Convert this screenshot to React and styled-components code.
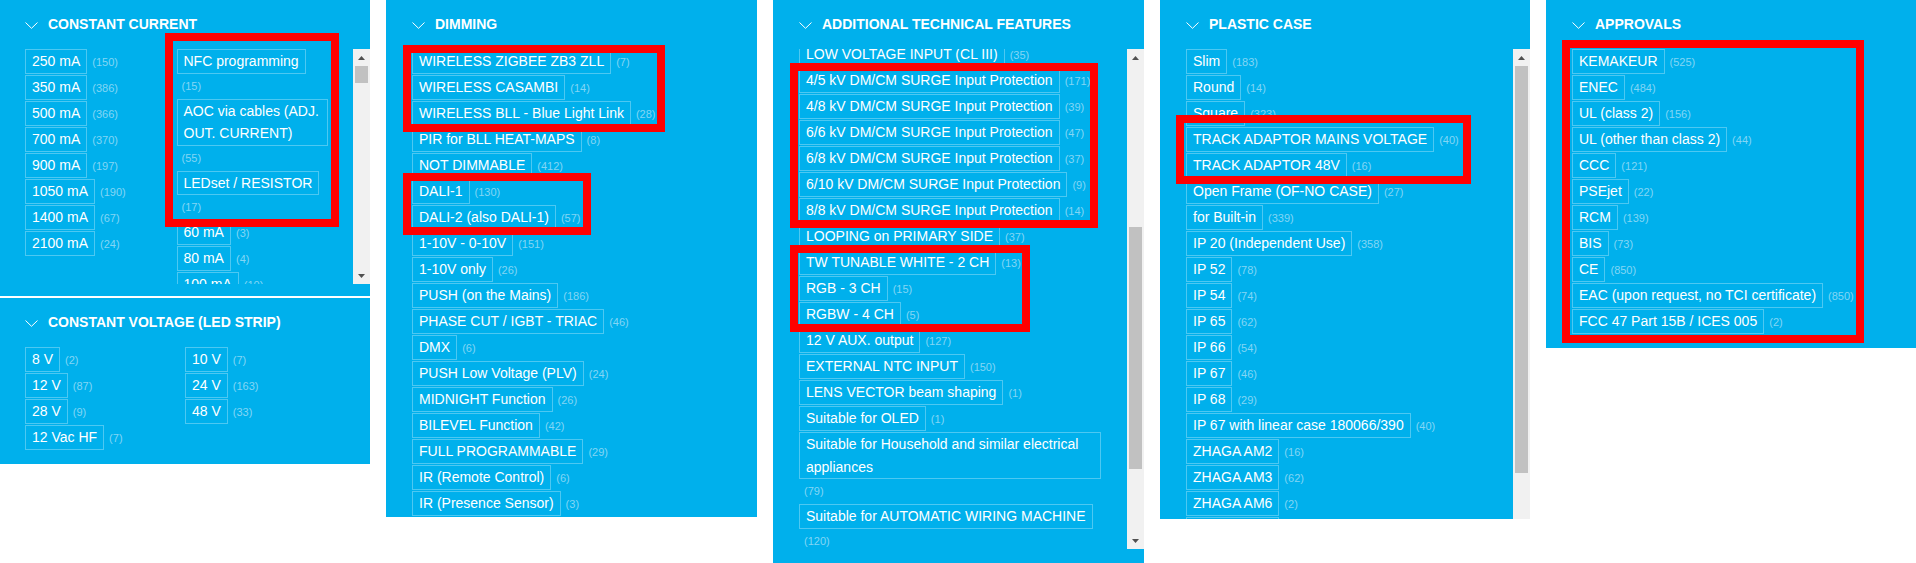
import styled, { createGlobalStyle } from "styled-components";

const GlobalStyle = createGlobalStyle`
  html, body {
    margin: 0;
    padding: 0;
    background: #ffffff;
  }
  body {
    font-family: "Liberation Sans", Arial, Helvetica, sans-serif;
  }
`;

const Page = styled.div`
  display: flex;
  align-items: flex-start;
  gap: 16px;
  width: 1916px;
  overflow: hidden;
`;

const Panel = styled.section`
  --inset: ${(p) => p.$inset ?? 26}px;
  position: relative;
  flex: none;
  width: ${(p) => p.$width}px;
  height: ${(p) => (p.$height ? `${p.$height}px` : "auto")};
  overflow: hidden;
  background: #00b0ec;
  color: #ffffff;
`;

const Section = styled.div`
  padding-bottom: ${(p) => p.$pb ?? 0}px;
  & + & {
    border-top: 2px solid #ffffff;
  }
`;

const Header = styled.div`
  display: flex;
  align-items: center;
  gap: 10px;
  height: 20px;
  padding: 14px var(--inset) 0;
  margin-bottom: 15px;
  font-size: 14px;
  font-weight: 700;
  text-transform: uppercase;
  white-space: nowrap;
`;

const Chevron = styled.svg`
  flex: none;
  margin-top: 3px;
`;

const ScrollArea = styled.div`
  display: flex;
  height: ${(p) => p.$height}px;
`;

const Viewport = styled.div`
  flex: 1;
  min-width: 0;
  overflow: hidden;
  padding: 0 var(--inset);
`;

const Plain = styled.div`
  padding: 0 var(--inset);
`;

const Rail = styled.div`
  flex: none;
  width: 17px;
  display: flex;
  flex-direction: column;
  background: #f1f1f1;
`;

const RailButton = styled.div`
  flex: none;
  height: 17px;
  display: flex;
  align-items: center;
  justify-content: center;
`;

const Track = styled.div`
  flex: 1;
  min-height: 0;
`;

const Thumb = styled.div`
  margin: ${(p) => p.$offset}px 2px 0;
  height: ${(p) => p.$size}px;
  background: #c1c1c1;
`;

const Columns = styled.div`
  display: grid;
  grid-template-columns: 1fr 1fr;
  align-items: start;
`;

const List = styled.ul`
  list-style: none;
  margin: ${(p) => p.$shift ?? 0}px 0 0;
  padding: 0;
`;

const Item = styled.li`
  font-size: 14px;
  line-height: 22.5px;
  margin-bottom: 1.5px;
`;

const Tag = styled.span`
  display: inline-block;
  padding: 0 6px;
  border: 1px solid rgba(255, 255, 255, 0.3);
  line-height: 22.5px;
  color: #ffffff;
`;

const Count = styled.span`
  margin-left: 5px;
  font-size: 11px;
  color: #83d6f5;
`;

const Mark = styled.div`
  position: absolute;
  left: ${(p) => p.$x}px;
  top: ${(p) => p.$y}px;
  width: ${(p) => p.$w}px;
  height: ${(p) => p.$h}px;
  box-sizing: border-box;
  border: 8px solid #ff0000;
  pointer-events: none;
`;

const Head = ({ children }) => (
  <Header>
    <Chevron width="13" height="7" viewBox="0 0 13 7">
      <polyline points="0.5,0.5 6.5,6.3 12.5,0.5" fill="none" stroke="#ffffff" strokeWidth="1" />
    </Chevron>
    <span>{children}</span>
  </Header>
);

const Filters = ({ items, shift }) => (
  <List $shift={shift}>
    {items.map(([label, count]) => (
      <Item key={label}>
        <Tag>{label}</Tag>
        <Count>({count})</Count>
      </Item>
    ))}
  </List>
);

const Scroller = ({ height, offset, size, children }) => (
  <ScrollArea $height={height}>
    <Viewport>{children}</Viewport>
    <Rail>
      <RailButton>
        <svg width="7" height="4" viewBox="0 0 7 4">
          <polygon points="0,4 3.5,0 7,4" fill="#505050" />
        </svg>
      </RailButton>
      <Track>
        <Thumb $offset={offset} $size={size} />
      </Track>
      <RailButton>
        <svg width="7" height="4" viewBox="0 0 7 4">
          <polygon points="0,0 7,0 3.5,4" fill="#505050" />
        </svg>
      </RailButton>
    </Rail>
  </ScrollArea>
);

const currentLeft = [
  ["250 mA", 150],
  ["350 mA", 386],
  ["500 mA", 366],
  ["700 mA", 370],
  ["900 mA", 197],
  ["1050 mA", 190],
  ["1400 mA", 67],
  ["2100 mA", 24],
];

const currentRight = [
  ["NFC programming", 15],
  ["AOC via cables (ADJ. OUT. CURRENT)", 55],
  ["LEDset / RESISTOR", 17],
  ["60 mA", 3],
  ["80 mA", 4],
  ["100 mA", 10],
];

const voltageLeft = [
  ["8 V", 2],
  ["12 V", 87],
  ["28 V", 9],
  ["12 Vac HF", 7],
];

const voltageRight = [
  ["10 V", 7],
  ["24 V", 163],
  ["48 V", 33],
];

const dimming = [
  ["WIRELESS ZIGBEE ZB3 ZLL", 7],
  ["WIRELESS CASAMBI", 14],
  ["WIRELESS BLL - Blue Light Link", 28],
  ["PIR for BLL HEAT-MAPS", 8],
  ["NOT DIMMABLE", 412],
  ["DALI-1", 130],
  ["DALI-2 (also DALI-1)", 57],
  ["1-10V - 0-10V", 151],
  ["1-10V only", 26],
  ["PUSH (on the Mains)", 186],
  ["PHASE CUT / IGBT - TRIAC", 46],
  ["DMX", 6],
  ["PUSH Low Voltage (PLV)", 24],
  ["MIDNIGHT Function", 26],
  ["BILEVEL Function", 42],
  ["FULL PROGRAMMABLE", 29],
  ["IR (Remote Control)", 6],
  ["IR (Presence Sensor)", 3],
];

const features = [
  ["LOW VOLTAGE INPUT (CL III)", 35],
  ["4/5 kV DM/CM SURGE Input Protection", 171],
  ["4/8 kV DM/CM SURGE Input Protection", 39],
  ["6/6 kV DM/CM SURGE Input Protection", 47],
  ["6/8 kV DM/CM SURGE Input Protection", 37],
  ["6/10 kV DM/CM SURGE Input Protection", 9],
  ["8/8 kV DM/CM SURGE Input Protection", 14],
  ["LOOPING on PRIMARY SIDE", 37],
  ["TW TUNABLE WHITE - 2 CH", 13],
  ["RGB - 3 CH", 15],
  ["RGBW - 4 CH", 5],
  ["12 V AUX. output", 127],
  ["EXTERNAL NTC INPUT", 150],
  ["LENS VECTOR beam shaping", 1],
  ["Suitable for OLED", 1],
  ["Suitable for Household and similar electrical appliances", 79],
  ["Suitable for AUTOMATIC WIRING MACHINE", 120],
];

const cases = [
  ["Slim", 183],
  ["Round", 14],
  ["Square", 323],
  ["TRACK ADAPTOR MAINS VOLTAGE", 40],
  ["TRACK ADAPTOR 48V", 16],
  ["Open Frame (OF-NO CASE)", 27],
  ["for Built-in", 339],
  ["IP 20 (Independent Use)", 358],
  ["IP 52", 78],
  ["IP 54", 74],
  ["IP 65", 62],
  ["IP 66", 54],
  ["IP 67", 46],
  ["IP 68", 29],
  ["IP 67 with linear case 180066/390", 40],
  ["ZHAGA AM2", 16],
  ["ZHAGA AM3", 62],
  ["ZHAGA AM6", 2],
  ["ZHAGA AM8", 4],
];

const approvals = [
  ["KEMAKEUR", 525],
  ["ENEC", 484],
  ["UL (class 2)", 156],
  ["UL (other than class 2)", 44],
  ["CCC", 121],
  ["PSEjet", 22],
  ["RCM", 139],
  ["BIS", 73],
  ["CE", 850],
  ["EAC (upon request, no TCI certificate)", 850],
  ["FCC 47 Part 15B / ICES 005", 2],
];

const App = () => {
  return (
    <>
      <GlobalStyle />
      <Page>
        <Panel $width={370} $inset={25}>
          <Section $pb={12}>
            <Head>Constant current</Head>
            <Scroller height={235} offset={0} size={17}>
              <Columns>
                <Filters items={currentLeft} />
                <Filters items={currentRight} />
              </Columns>
            </Scroller>
          </Section>
          <Section $pb={13}>
            <Head>Constant voltage (LED strip)</Head>
            <Plain>
              <Columns>
                <Filters items={voltageLeft} />
                <Filters items={voltageRight} />
              </Columns>
            </Plain>
          </Section>
          <Mark $x={165} $y={33} $w={174} $h={194} />
        </Panel>

        <Panel $width={371}>
          <Head>Dimming</Head>
          <Plain>
            <Filters items={dimming} />
          </Plain>
          <Mark $x={17} $y={45} $w={262} $h={87} />
          <Mark $x={17} $y={173} $w={188} $h={62} />
        </Panel>

        <Panel $width={371}>
          <Section $pb={14}>
            <Head>Additional technical features</Head>
            <Scroller height={500} offset={161} size={242}>
              <Filters items={features} shift={-7} />
            </Scroller>
          </Section>
          <Mark $x={17} $y={63} $w={308} $h={165} />
          <Mark $x={17} $y={245} $w={240} $h={87} />
        </Panel>

        <Panel $width={370} $height={519}>
          <Head>Plastic case</Head>
          <Scroller height={500} offset={0} size={407}>
            <Filters items={cases} />
          </Scroller>
          <Mark $x={16} $y={115} $w={295} $h={69} />
        </Panel>

        <Panel $width={370}>
          <Section $pb={13}>
            <Head>Approvals</Head>
            <Plain>
              <Filters items={approvals} />
            </Plain>
          </Section>
          <Mark $x={16} $y={40} $w={302} $h={303} />
        </Panel>
      </Page>
    </>
  );
};

export default App;
